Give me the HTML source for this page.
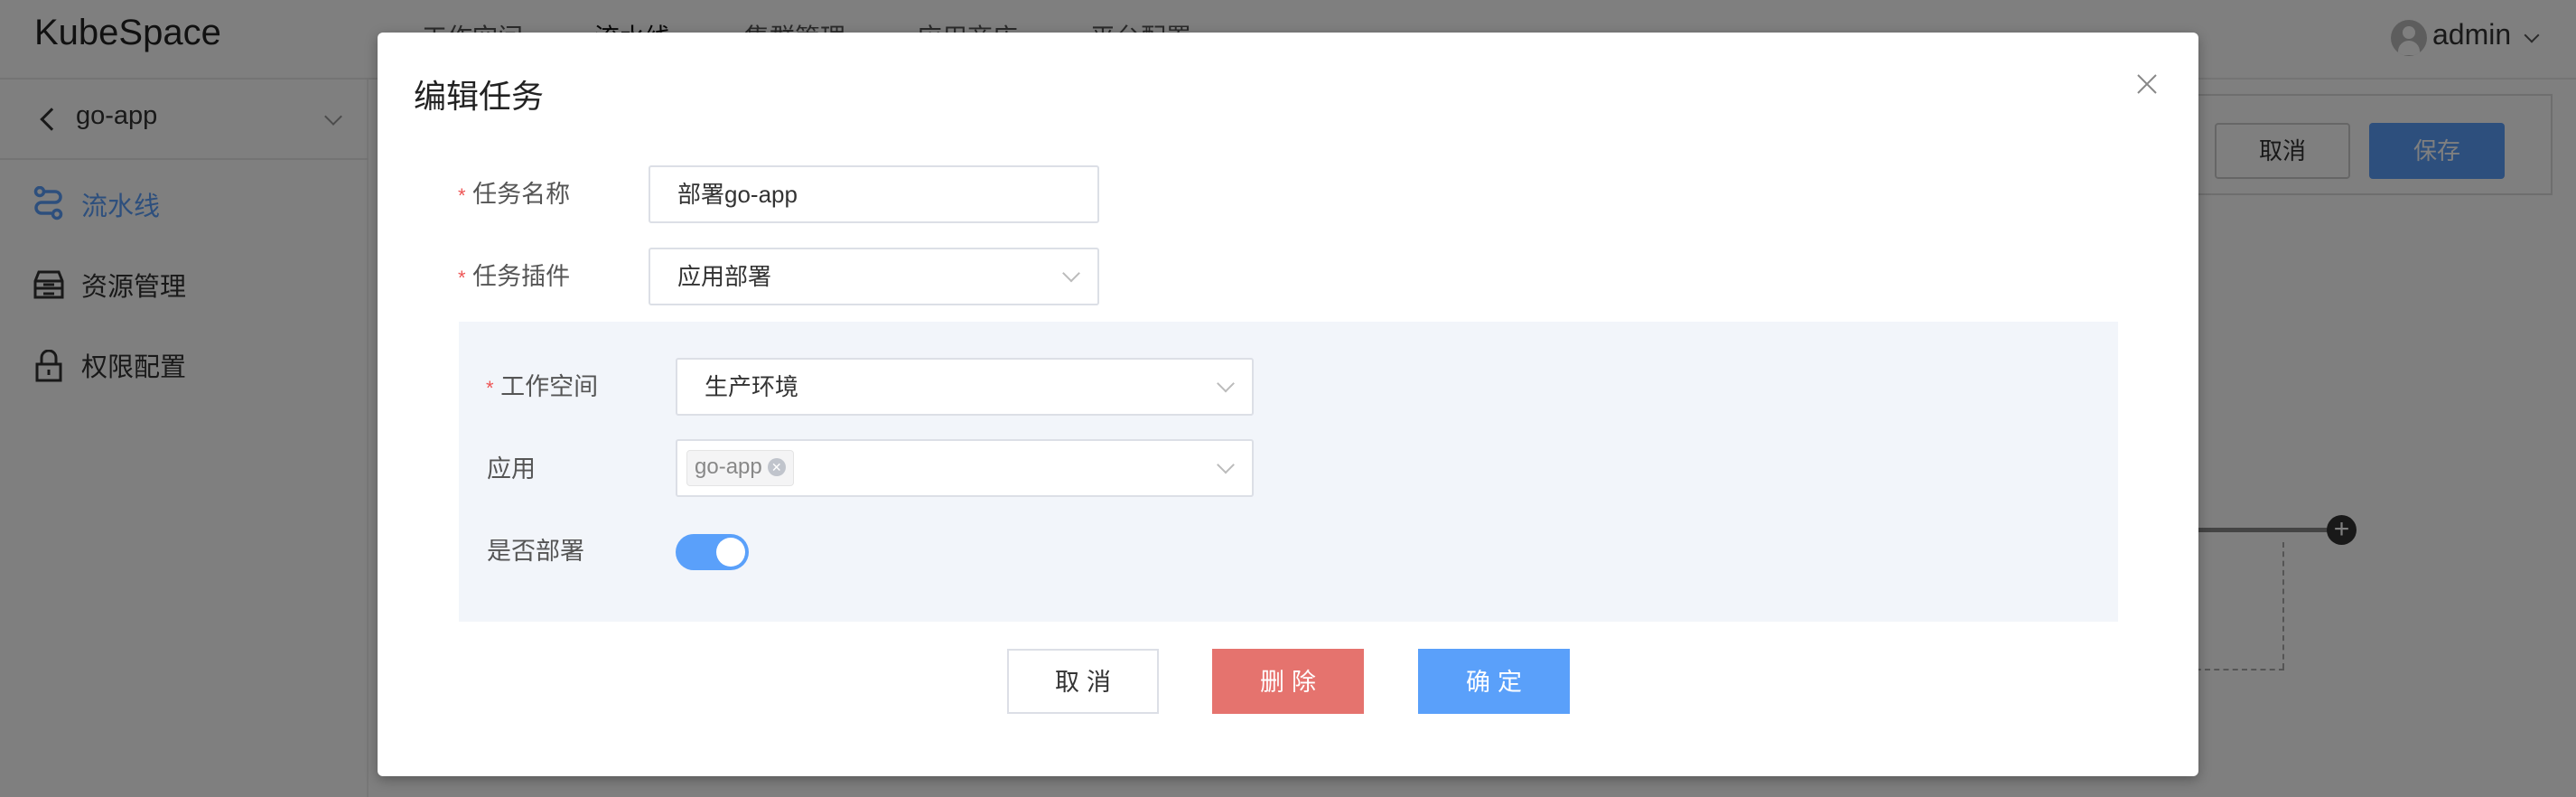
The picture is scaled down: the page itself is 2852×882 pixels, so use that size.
<!DOCTYPE html>
<html><head><meta charset="utf-8"><style>
*{margin:0;padding:0;box-sizing:border-box}
body{width:2852px;height:882px;overflow:hidden;position:relative;background:#fff;font-family:"Liberation Sans","Noto Sans CJK SC",sans-serif;color:#333}
.abs{position:absolute}
.hdr{left:0;top:0;width:2852px;height:88px;background:#fff;border-bottom:2px solid #e8e8e8}
.nav{top:20px;font-size:28px;color:#555;white-space:nowrap}
.side{left:0;top:88px;width:408px;height:794px;background:#fff;border-right:2px solid #eee}
.mi{font-size:29px;color:#333;white-space:nowrap}
.ov{left:0;top:0;width:2852px;height:882px;background:rgba(0,0,0,.5)}
.modal{left:418px;top:36px;width:2016px;height:823px;background:#fff;border-radius:6px;box-shadow:0 4px 14px rgba(0,0,0,.3)}
.lbl{font-size:27px;color:#555;white-space:nowrap}
.star{color:#e55;font-size:22px}
.inp{background:#fff;border:2px solid #dcdfe6;border-radius:3px;font-size:26px;color:#333;padding-left:30px;padding-bottom:3px;display:flex;align-items:center}
.chev{position:absolute;right:22px;top:50%;width:14px;height:14px;border-right:2px solid #bbb;border-bottom:2px solid #bbb;transform:translateY(-75%) rotate(45deg)}
.btn{top:718px;height:72px;width:168px;display:flex;align-items:center;justify-content:center;font-size:27px;letter-spacing:8px;padding-left:8px;padding-bottom:4px}
</style></head><body>
<div class="abs hdr"></div>
<div class="abs" style="left:38px;top:14px;font-size:40px;color:#222">KubeSpace</div>
<div class="abs nav" style="left:467px">工作空间</div>
<div class="abs nav" style="left:658px;color:#111">流水线</div>
<div class="abs nav" style="left:824px">集群管理</div>
<div class="abs nav" style="left:1015px">应用商店</div>
<div class="abs nav" style="left:1207px">平台配置</div>
<div class="abs" style="left:2647px;top:22px;width:40px;height:40px;border-radius:50%;background:#bbb;overflow:hidden"><div style="position:absolute;left:13px;top:7px;width:14px;height:14px;border-radius:50%;background:#fff"></div><div style="position:absolute;left:8px;top:23px;width:24px;height:16px;border-radius:12px 12px 0 0;background:#fff"></div></div>
<div class="abs" style="left:2693px;top:20px;font-size:32px;color:#333">admin</div>
<div class="abs" style="left:2797px;top:33px;width:12px;height:12px;border-right:2px solid #555;border-bottom:2px solid #555;transform:rotate(45deg)"></div>
<div class="abs side"></div>
<div class="abs" style="left:0;top:175px;width:408px;height:2px;background:#e8e8e8"></div>
<div class="abs" style="left:48px;top:123px;width:18px;height:18px;border-left:3px solid #333;border-bottom:3px solid #333;transform:rotate(45deg)"></div>
<div class="abs mi" style="left:84px;top:112px">go-app</div>
<div class="abs" style="left:362px;top:122px;width:14px;height:14px;border-right:2px solid #999;border-bottom:2px solid #999;transform:rotate(45deg)"></div>
<svg class="abs" style="left:36px;top:206px" width="36" height="40" viewBox="0 0 36 40" fill="none" stroke="#5a9efa" stroke-width="3.5"><circle cx="8" cy="6" r="4.5"/><path d="M13 6h12a6 6 0 0 1 0 12H10a6 6 0 0 0 0 12h11"/><circle cx="27" cy="31" r="4.5"/></svg>
<div class="abs mi" style="left:90px;top:205px;color:#5a9efa">流水线</div>
<svg class="abs" style="left:37px;top:299px" width="34" height="34" viewBox="0 0 34 34" fill="none" stroke="#333" stroke-width="3"><path d="M6 2h22l4 10v8H2v-8z M2 12h30 M2 20v10h30V20 M11 16h12 M11 26h12"/></svg>
<div class="abs mi" style="left:90px;top:294px">资源管理</div>
<svg class="abs" style="left:39px;top:387px" width="30" height="36" viewBox="0 0 30 36" fill="none" stroke="#333" stroke-width="3"><path d="M7 16V9a8 8 0 0 1 16 0v7 M2 16h26v18H2z M15 22v6"/></svg>
<div class="abs mi" style="left:90px;top:383px">权限配置</div>
<div class="abs" style="left:2408px;top:104px;width:418px;height:112px;border:2px solid #ddd;background:#fff"></div>
<div class="abs" style="left:2452px;top:136px;width:150px;height:62px;border:2px solid #ccc;border-radius:4px;display:flex;align-items:center;justify-content:center;font-size:26px;padding-bottom:4px">取消</div>
<div class="abs" style="left:2623px;top:136px;width:150px;height:62px;background:#5a9efa;border-radius:4px;display:flex;align-items:center;justify-content:center;font-size:26px;color:#fff;padding-bottom:4px">保存</div>
<div class="abs" style="left:2400px;top:584px;width:190px;height:5px;background:#888"></div>
<div class="abs" style="left:2576px;top:570px;width:33px;height:33px;border-radius:50%;background:#333;color:#fff;font-size:30px;line-height:31px;text-align:center">+</div>
<div class="abs" style="left:2527px;top:600px;width:0;height:140px;border-left:2px dashed #aaa"></div>
<div class="abs" style="left:2400px;top:740px;width:129px;height:0;border-top:2px dashed #aaa"></div>

<div class="abs ov"></div>
<div class="abs modal"></div>
<div class="abs" style="left:458px;top:78px;font-size:36px;color:#222">编辑任务</div>
<svg class="abs" style="left:2366px;top:82px" width="22" height="22" viewBox="0 0 22 22" stroke="#888" stroke-width="2"><path d="M1 1L21 21M21 1L1 21"/></svg>

<div class="abs lbl" style="left:507px;top:193px"><span class="star">*</span> 任务名称</div>
<div class="abs inp" style="left:718px;top:183px;width:499px;height:64px">部署go-app</div>
<div class="abs lbl" style="left:507px;top:284px"><span class="star">*</span> 任务插件</div>
<div class="abs inp" style="left:718px;top:274px;width:499px;height:64px">应用部署<span class="chev"></span></div>

<div class="abs" style="left:508px;top:356px;width:1837px;height:332px;background:#f2f5fa"></div>
<div class="abs lbl" style="left:538px;top:406px"><span class="star">*</span> 工作空间</div>
<div class="abs inp" style="left:748px;top:396px;width:640px;height:64px">生产环境<span class="chev"></span></div>
<div class="abs lbl" style="left:539px;top:497px">应用</div>
<div class="abs inp" style="left:748px;top:486px;width:640px;height:64px;padding-left:10px;padding-bottom:0"><span class="chev"></span>
<span style="display:inline-flex;align-items:center;height:40px;padding:0 8px 2px;background:#f4f4f5;border:1px solid #e4e4e4;border-radius:4px;font-size:24px;color:#888">go-app<span style="display:inline-block;width:20px;height:20px;border-radius:50%;background:#c0c4cc;color:#fff;font-size:14px;line-height:20px;text-align:center;margin-left:6px">✕</span></span></div>
<div class="abs lbl" style="left:539px;top:588px">是否部署</div>
<div class="abs" style="left:748px;top:591px;width:81px;height:40px;border-radius:20px;background:#5aa0fa"><div style="position:absolute;right:4px;top:4px;width:32px;height:32px;border-radius:50%;background:#fff"></div></div>

<div class="abs btn" style="left:1115px;border:2px solid #dcdfe6;color:#333;background:#fff">取消</div>
<div class="abs btn" style="left:1342px;background:#e5736e;color:#fff">删除</div>
<div class="abs btn" style="left:1570px;background:#5aa0fa;color:#fff">确定</div>
</body></html>
